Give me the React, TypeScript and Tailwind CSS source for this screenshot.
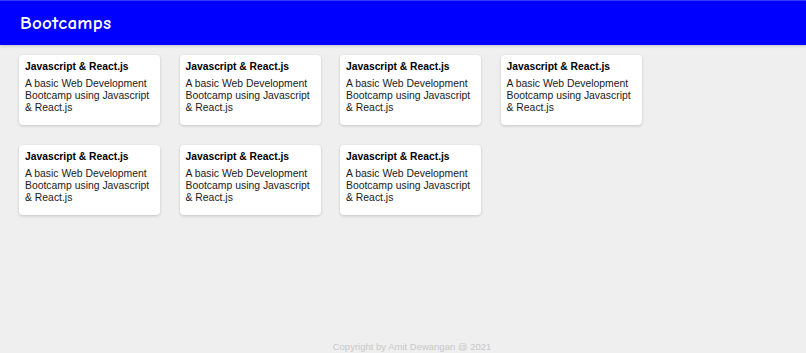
const cards = Array.from({ length: 7 }, () => ({
  title: "Javascript & React.js",
  description: "A basic Web Development Bootcamp using Javascript & React.js",
}));

export default function App() {
  return (
    <div className="min-h-screen bg-[#efefef] flex flex-col font-['Liberation_Sans',Arial,sans-serif]">
      <header className="h-[45px] bg-[#0000ff] border-t border-[#3a3aff] flex items-center px-[20px] shadow-[0_1px_3px_rgba(0,0,0,0.2)]">
        <h1 className="text-white text-[19px] font-semibold font-['Comic_Sans_MS','Comic_Neue',cursive] tracking-[0.3px]">
          Bootcamps
        </h1>
      </header>
      <main className="flex-1 flex flex-wrap content-start gap-x-[19.5px] gap-y-[20px] pl-[19px] pt-[10px] w-[680px]">
        {cards.map((c, i) => (
          <div
            key={i}
            className="w-[141px] h-[70px] bg-white rounded-[4px] shadow-[0_1px_3px_rgba(0,0,0,0.18)] pl-[6px] pr-[9px] pt-[6px]"
          >
            <h2 className="text-[10.3px] leading-[12px] font-bold text-black whitespace-nowrap">{c.title}</h2>
            <p className="text-[10.4px] leading-[12px] text-[#1a1a1a] mt-[5px]">{c.description}</p>
          </div>
        ))}
      </main>
      <footer className="text-center text-[9.5px] leading-[12px] text-[#c8c8c8] pl-[18px]">
        Copyright by Amit Dewangan @ 2021
      </footer>
    </div>
  );
}
